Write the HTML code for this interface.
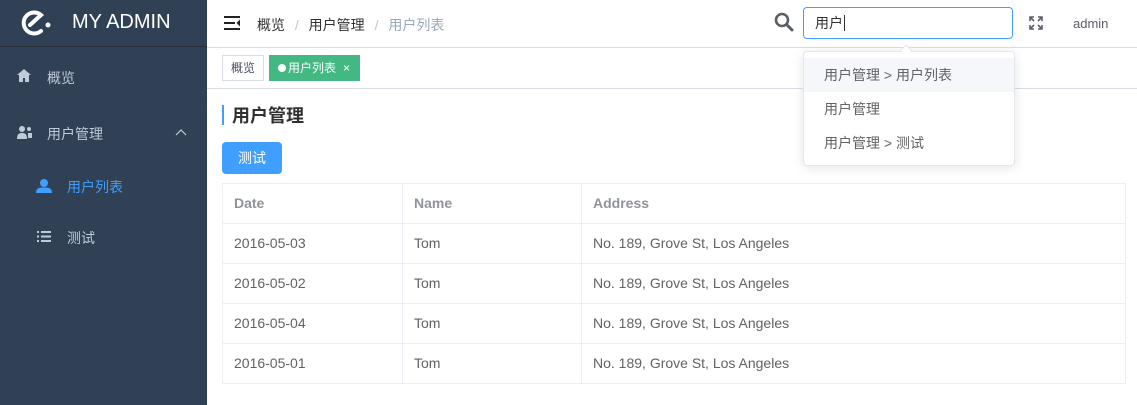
<!DOCTYPE html>
<html><head><meta charset="utf-8"><style>
*{margin:0;padding:0;box-sizing:border-box}
body{width:1137px;height:405px;overflow:hidden;font-family:"Liberation Sans","Noto Sans CJK SC",sans-serif;background:#fff;position:relative;font-size:14px;color:#303133}
.side{position:absolute;left:0;top:0;width:207px;height:405px;background:#304156}
.logo{height:47px;border-bottom:1px solid #2a2f36;position:relative}
.logo span{position:absolute;left:72px;top:11px;color:#fff;font-size:20px}
.mi{position:absolute;color:#bfcbd9;font-size:14px}
.top{position:absolute;left:207px;top:0;right:0;height:48px;border-bottom:1px solid #d8dce5}
.tags{position:absolute;left:207px;top:49px;right:0;height:40px;border-bottom:1px solid #d8dce5}
.tag{position:absolute;top:6px;height:26px;font-size:12px;line-height:24px;padding:0 8px;border:1px solid #d8dce5;white-space:nowrap}
table{position:absolute;left:222px;top:183px;width:904px;border-collapse:collapse}
td,th{border:1px solid #ebeef5;height:40px;text-align:left;padding:0 11px 1px;font-size:14px;color:#606266;font-weight:normal;line-height:16px}
th{font-weight:bold;color:#909399}
.dd{position:absolute;left:803px;top:51px;width:212px;height:115px;background:#fff;border:1px solid #e4e7ed;border-radius:4px;box-shadow:0 2px 12px rgba(0,0,0,.1)}
.dd div{height:34px;line-height:34px;padding-left:20px;color:#606266;font-size:14px}
</style></head><body>
<div class="side">
 <div class="logo">
  <svg style="position:absolute;left:21px;top:8px" width="32" height="30" viewBox="0 0 32 30"><path d="M20 23 A10.5 10.5 0 1 1 20 7 L9 17" fill="none" stroke="#fff" stroke-width="4" stroke-linecap="round"/><circle cx="27" cy="17" r="2.5" fill="#fff"/></svg>
  <span>MY ADMIN</span>
 </div>
 <svg style="position:absolute;left:17px;top:69px" width="14" height="13" viewBox="0 0 14 13"><path d="M7 0L0 6h2v7h4V9h2v4h4V6h2z" fill="#bfcbd9"/></svg>
 <div class="mi" style="left:47px;top:68px">概览</div>
 <svg style="position:absolute;left:17px;top:125px" width="16" height="14" viewBox="0 0 16 14"><circle cx="5" cy="4" r="3" fill="#bfcbd9"/><path d="M0 14c0-5 2-6 5-6s5 1 5 6z" fill="#bfcbd9"/><circle cx="12" cy="4" r="2" fill="#bfcbd9"/><rect x="11" y="8" width="4" height="5" fill="#bfcbd9"/></svg>
 <div class="mi" style="left:47px;top:124px">用户管理</div>
 <svg style="position:absolute;left:175px;top:129px" width="12" height="7"><path d="M1 6l5-5 5 5" fill="none" stroke="#bfcbd9" stroke-width="1.2"/></svg>
 <svg style="position:absolute;left:36px;top:179px" width="16" height="14" viewBox="0 0 16 14"><circle cx="8" cy="4" r="4" fill="#409eff"/><path d="M0 14c0-5 3-5.5 8-5.5s8 .5 8 5.5z" fill="#409eff"/></svg>
 <div class="mi" style="left:67px;top:177px;color:#409eff">用户列表</div>
 <svg style="position:absolute;left:37px;top:231px" width="14" height="11"><g fill="#bfcbd9"><rect x="0" y="0" width="2" height="2"/><rect x="4" y="0" width="10" height="2"/><rect x="0" y="4.5" width="2" height="2"/><rect x="4" y="4.5" width="10" height="2"/><rect x="0" y="9" width="2" height="2"/><rect x="4" y="9" width="10" height="2"/></g></svg>
 <div class="mi" style="left:67px;top:228px">测试</div>
</div>
<div class="top">
 <svg style="position:absolute;left:17px;top:16px" width="17" height="14"><g fill="#222"><rect x="0" y="0" width="16" height="2"/><rect x="0" y="6" width="11" height="2"/><rect x="0" y="12" width="16" height="2"/><path d="M16 3.5v7l-3.5-3.5z"/></g></svg>
 <div style="position:absolute;left:50px;top:15px;font-size:14px;color:#303133">概览 <span style="color:#c0c4cc;margin:0 6px">/</span> 用户管理 <span style="color:#c0c4cc;margin:0 6px">/</span> <span style="color:#97a8be">用户列表</span></div>
 <svg style="position:absolute;left:567px;top:12px" width="20" height="20"><circle cx="8" cy="8" r="6" fill="none" stroke="#5a5e66" stroke-width="2.6"/><path d="M12.5 12.5L18 18" stroke="#5a5e66" stroke-width="3" stroke-linecap="round"/></svg>
 <div style="position:absolute;left:596px;top:7px;width:210px;height:32px;border:1px solid #409eff;border-radius:4px;padding-left:11px;line-height:30px;color:#303133">用户<span style="border-left:1px solid #303133;margin-left:1px"></span></div>
 <svg style="position:absolute;left:822px;top:16px" width="14" height="14"><g stroke="#5a5e66" stroke-width="1.6" fill="none"><path d="M1 5V1h4M1 1l4 4M13 5V1H9M13 1L9 5M1 9v4h4M1 13l4-4M13 9v4H9M13 13L9 9"/></g></svg>
 <div style="position:absolute;left:866px;top:16px;font-size:13px;color:#5a5e66">admin</div>
</div>
<div class="tags">
 <div class="tag" style="left:15px;color:#495060;background:#fff">概览</div>
 <div class="tag" style="left:62px;background:#42b983;border-color:#42b983;color:#fff;width:91px;padding-left:8px;padding-right:0"><span style="display:inline-block;width:8px;height:8px;border-radius:50%;background:#fff;margin-right:2px"></span>用户列表<span style="margin-left:7px">×</span></div>
</div>
<div style="position:absolute;left:222px;top:105px;width:2px;height:20px;background:#409eff"></div>
<div style="position:absolute;left:232px;top:102px;font-size:18px;font-weight:bold;color:#303133">用户管理</div>
<div style="position:absolute;left:222px;top:142px;width:60px;height:32px;background:#409eff;border-radius:4px;color:#fff;line-height:32px;text-align:center;font-size:14px">测试</div>
<table>
<tr><th style="width:180px">Date</th><th style="width:179px">Name</th><th>Address</th></tr>
<tr><td>2016-05-03</td><td>Tom</td><td>No. 189, Grove St, Los Angeles</td></tr>
<tr><td>2016-05-02</td><td>Tom</td><td>No. 189, Grove St, Los Angeles</td></tr>
<tr><td>2016-05-04</td><td>Tom</td><td>No. 189, Grove St, Los Angeles</td></tr>
<tr><td>2016-05-01</td><td>Tom</td><td>No. 189, Grove St, Los Angeles</td></tr>
</table>
<div class="dd">
 <div style="margin-top:6px;background:#f5f7fa">用户管理 &gt; 用户列表</div>
 <div>用户管理</div>
 <div>用户管理 &gt; 测试</div>
</div>
<div style="position:absolute;left:902px;top:46px;width:8px;height:8px;background:#fff;border-left:1px solid #e4e7ed;border-top:1px solid #e4e7ed;transform:rotate(45deg)"></div>
</body></html>
